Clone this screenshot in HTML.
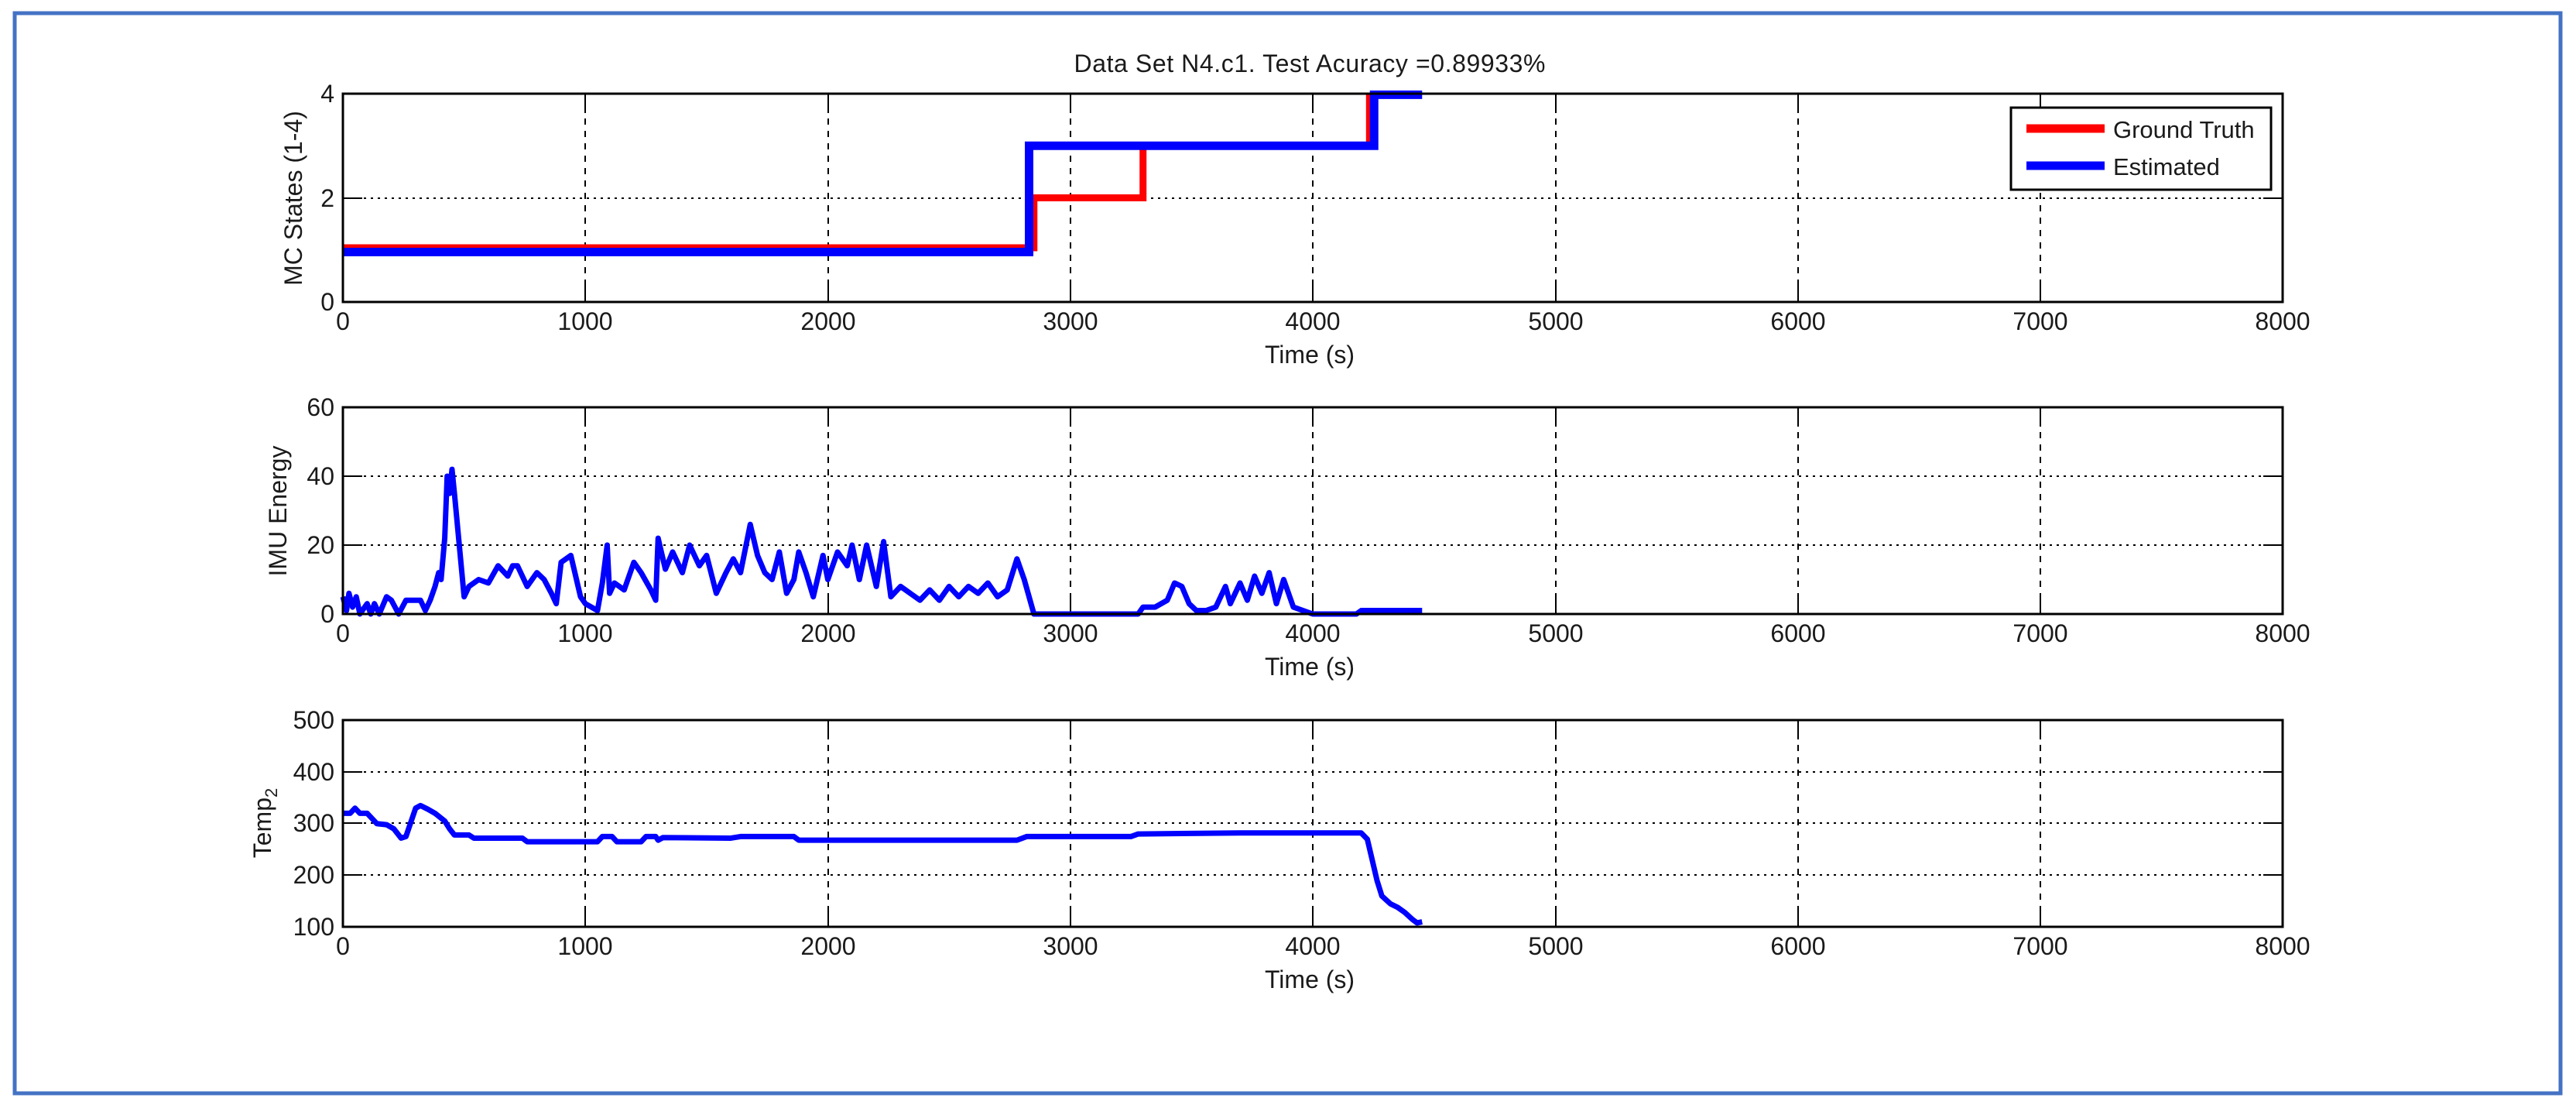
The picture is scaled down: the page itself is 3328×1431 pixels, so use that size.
<!DOCTYPE html>
<html><head><meta charset="utf-8"><style>
html,body{margin:0;padding:0;background:#fff;}
svg{display:block;}
text{font-family:"Liberation Sans",Arial,sans-serif;fill:#1a1a1a;}
</style></head><body>
<svg width="3328" height="1431" viewBox="0 0 3328 1431" xmlns="http://www.w3.org/2000/svg">
<rect x="0" y="0" width="3328" height="1431" fill="#fff"/>
<rect x="19" y="17" width="3289" height="1395" fill="none" stroke="#4472C4" stroke-width="5"/>

<text x="1692" y="93" font-size="32" text-anchor="middle" textLength="609">Data Set N4.c1. Test Acuracy =0.89933%</text>

<g stroke="#000" stroke-width="2" fill="none">
  <g stroke-dasharray="3 6">
    <line x1="443" y1="256" x2="2949" y2="256"/>
  </g>
  <g stroke-dasharray="8 8">
    <line x1="756" y1="121" x2="756" y2="390"/><line x1="1070" y1="121" x2="1070" y2="390"/>
    <line x1="1383" y1="121" x2="1383" y2="390"/><line x1="1696" y1="121" x2="1696" y2="390"/>
    <line x1="2010" y1="121" x2="2010" y2="390"/><line x1="2323" y1="121" x2="2323" y2="390"/>
    <line x1="2636" y1="121" x2="2636" y2="390"/>
  </g>
  <g stroke-dasharray="3 6">
    <line x1="443" y1="615" x2="2949" y2="615"/><line x1="443" y1="704" x2="2949" y2="704"/>
  </g>
  <g stroke-dasharray="8 8">
    <line x1="756" y1="526" x2="756" y2="793"/><line x1="1070" y1="526" x2="1070" y2="793"/>
    <line x1="1383" y1="526" x2="1383" y2="793"/><line x1="1696" y1="526" x2="1696" y2="793"/>
    <line x1="2010" y1="526" x2="2010" y2="793"/><line x1="2323" y1="526" x2="2323" y2="793"/>
    <line x1="2636" y1="526" x2="2636" y2="793"/>
  </g>
  <g stroke-dasharray="3 6">
    <line x1="443" y1="997" x2="2949" y2="997"/><line x1="443" y1="1063" x2="2949" y2="1063"/><line x1="443" y1="1130" x2="2949" y2="1130"/>
  </g>
  <g stroke-dasharray="8 8">
    <line x1="756" y1="930" x2="756" y2="1197"/><line x1="1070" y1="930" x2="1070" y2="1197"/>
    <line x1="1383" y1="930" x2="1383" y2="1197"/><line x1="1696" y1="930" x2="1696" y2="1197"/>
    <line x1="2010" y1="930" x2="2010" y2="1197"/><line x1="2323" y1="930" x2="2323" y2="1197"/>
    <line x1="2636" y1="930" x2="2636" y2="1197"/>
  </g>
</g>

<g stroke="#000" stroke-width="2">
  <path d="M756 121v25M1070 121v25M1383 121v25M1696 121v25M2010 121v25M2323 121v25M2636 121v25M756 390v-25M1070 390v-25M1383 390v-25M1696 390v-25M2010 390v-25M2323 390v-25M2636 390v-25M443 256h25M2949 256h-25"/>
  <path d="M756 526v25M1070 526v25M1383 526v25M1696 526v25M2010 526v25M2323 526v25M2636 526v25M756 793v-25M1070 793v-25M1383 793v-25M1696 793v-25M2010 793v-25M2323 793v-25M2636 793v-25M443 615h25M2949 615h-25M443 704h25M2949 704h-25"/>
  <path d="M756 930v25M1070 930v25M1383 930v25M1696 930v25M2010 930v25M2323 930v25M2636 930v25M756 1197v-25M1070 1197v-25M1383 1197v-25M1696 1197v-25M2010 1197v-25M2323 1197v-25M2636 1197v-25M443 997h25M2949 997h-25M443 1063h25M2949 1063h-25M443 1130h25M2949 1130h-25"/>
</g>

<g transform="translate(443,390) scale(0.31325,-67.25)" fill="none">
  <polyline vector-effect="non-scaling-stroke" stroke="#ff0000" stroke-width="9" points="0,1.04 2850,1.04 2850,2 3300,2 3300,3 4234,3 4234,4"/>
  <polyline vector-effect="non-scaling-stroke" stroke="#0000ff" stroke-width="11" points="0,0.96 2830,0.96 2830,3 4253,3 4253,3.98 4451,3.98"/>
</g>
<g transform="translate(443,793) scale(0.31325,-4.45)" fill="none">
  <polyline vector-effect="non-scaling-stroke" stroke="#0000ff" stroke-width="7" stroke-linejoin="round" points="0,5 15,1 25,6 40,2 55,5 70,0 100,3 115,0 130,3 150,0 180,5 200,4 230,0 260,4 280,4 320,4 340,1 360,4 380,8 395,12 405,10 420,22 430,40 440,35 450,42 460,35 480,20 500,5 520,8 560,10 600,9 640,14 680,11 700,14 720,14 760,8 800,12 830,10 860,6 880,3 900,15 940,17 980,5 1000,3 1050,1 1070,9 1090,20 1100,6 1120,9 1160,7 1200,15 1230,12 1270,7 1290,4 1300,22 1330,13 1360,18 1400,12 1430,20 1470,14 1500,17 1540,6 1580,12 1610,16 1640,12 1680,26 1710,17 1740,12 1770,10 1800,18 1830,6 1860,10 1880,18 1910,12 1940,5 1980,17 2000,10 2040,18 2080,14 2100,20 2130,10 2160,20 2200,8 2230,21 2260,5 2300,8 2340,6 2380,4 2420,7 2460,4 2500,8 2540,5 2580,8 2620,6 2660,9 2700,5 2740,7 2780,16 2810,10 2850,0 3280,0 3300,2 3350,2 3400,4 3430,9 3460,8 3490,3 3520,1 3560,1 3600,2 3640,8 3660,3 3700,9 3730,4 3760,11 3790,6 3820,12 3850,3 3880,10 3920,2 3960,1 4000,0 4180,0 4200,1 4220,1 4451,1"/>
</g>
<g transform="translate(443,1264) scale(0.31325,-0.6675)" fill="none">
  <polyline vector-effect="non-scaling-stroke" stroke="#0000ff" stroke-width="7" stroke-linejoin="round" points="0,320 30,320 50,330 70,320 100,320 140,300 180,298 210,290 240,272 260,275 300,330 320,335 350,328 380,320 420,305 440,290 460,278 520,278 540,272 740,272 760,265 1050,265 1070,275 1110,275 1130,265 1230,265 1250,275 1290,275 1300,268 1320,273 1600,272 1640,275 1860,275 1880,268 2780,268 2820,275 3250,275 3280,280 3700,282 4200,282 4225,270 4245,230 4265,190 4285,160 4320,145 4350,138 4380,128 4410,115 4430,108 4451,110"/>
</g>

<g stroke="#000" stroke-width="3" fill="none">
  <rect x="443" y="121" width="2506" height="269"/>
  <rect x="443" y="526" width="2506" height="267"/>
  <rect x="443" y="930" width="2506" height="267"/>
</g>

<rect x="2598" y="139" width="336" height="106" fill="#fff" stroke="#000" stroke-width="3"/>
<line x1="2618" y1="166" x2="2719" y2="166" stroke="#ff0000" stroke-width="11"/>
<line x1="2618" y1="214" x2="2719" y2="214" stroke="#0000ff" stroke-width="11"/>
<text x="2730" y="178" font-size="31">Ground Truth</text>
<text x="2730" y="226" font-size="31">Estimated</text>

<g font-size="32" text-anchor="middle">
  <g>
    <text x="443" y="426">0</text><text x="756" y="426">1000</text><text x="1070" y="426">2000</text>
    <text x="1383" y="426">3000</text><text x="1696" y="426">4000</text><text x="2010" y="426">5000</text>
    <text x="2323" y="426">6000</text><text x="2636" y="426">7000</text><text x="2949" y="426">8000</text>
    <text x="1692" y="469">Time (s)</text>
  </g>
  <g transform="translate(0,403)">
    <text x="443" y="426">0</text><text x="756" y="426">1000</text><text x="1070" y="426">2000</text>
    <text x="1383" y="426">3000</text><text x="1696" y="426">4000</text><text x="2010" y="426">5000</text>
    <text x="2323" y="426">6000</text><text x="2636" y="426">7000</text><text x="2949" y="426">8000</text>
    <text x="1692" y="469">Time (s)</text>
  </g>
  <g transform="translate(0,807)">
    <text x="443" y="426">0</text><text x="756" y="426">1000</text><text x="1070" y="426">2000</text>
    <text x="1383" y="426">3000</text><text x="1696" y="426">4000</text><text x="2010" y="426">5000</text>
    <text x="2323" y="426">6000</text><text x="2636" y="426">7000</text><text x="2949" y="426">8000</text>
    <text x="1692" y="469">Time (s)</text>
  </g>
</g>
<g font-size="32" text-anchor="end">
  <text x="432" y="132">4</text><text x="432" y="267">2</text><text x="432" y="401">0</text>
  <text x="432" y="537">60</text><text x="432" y="626">40</text><text x="432" y="715">20</text><text x="432" y="804">0</text>
  <text x="432" y="941">500</text><text x="432" y="1008">400</text><text x="432" y="1074">300</text><text x="432" y="1141">200</text><text x="432" y="1208">100</text>
</g>
<g font-size="32" text-anchor="middle">
  <text transform="translate(390,256) rotate(-90)">MC States (1-4)</text>
  <text transform="translate(370,660) rotate(-90)">IMU Energy</text>
  <text transform="translate(350,1063) rotate(-90)">Temp<tspan font-size="22" dy="8">2</tspan></text>
</g>
</svg>
</body></html>
